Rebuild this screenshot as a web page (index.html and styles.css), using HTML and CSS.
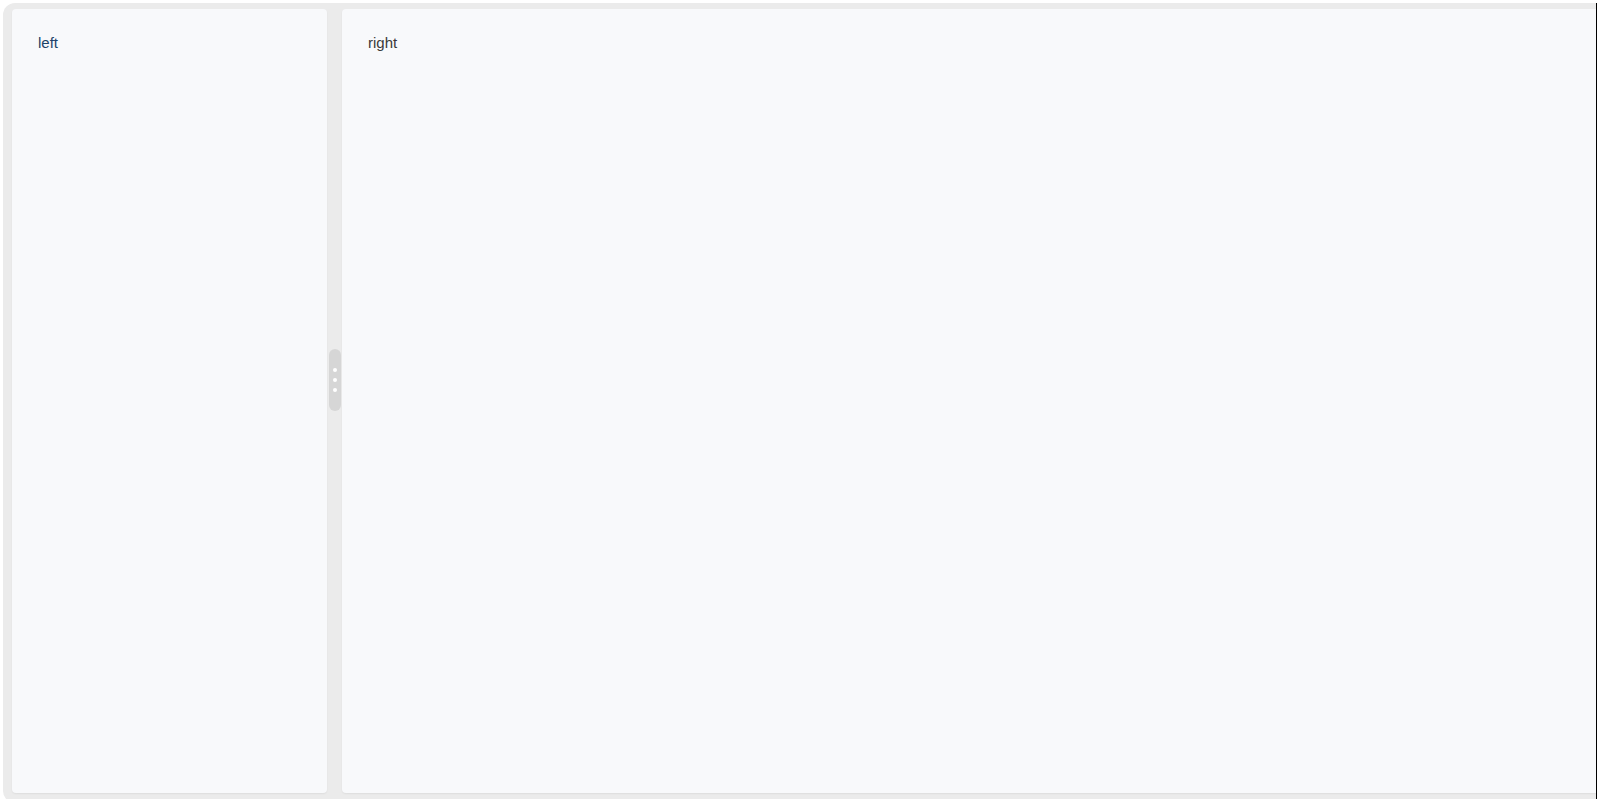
FILE: index.html
```html
<!DOCTYPE html>
<html lang="en">
<head>
  <meta charset="UTF-8">
  <title>Split panes</title>
  <link rel="stylesheet" href="styles.css">
</head>
<body>

<div class="frame">
  <div class="pane pane-left">
    <span class="label-left">left</span>
  </div>

  <div class="splitter">
    <div class="grip">
      <span class="dot"></span>
      <span class="dot"></span>
      <span class="dot"></span>
    </div>
  </div>

  <div class="pane pane-right">
    <span class="label-right">right</span>
  </div>
</div>

</body>
</html>
```

FILE: styles.css
```css
* { box-sizing: border-box; }
html, body {
  margin: 0;
  height: 100%;
  overflow: hidden;
}
body {
  font-family: 'Liberation Sans', Arial, sans-serif;
  background: #ffffff;
  padding: 3px 0 0 3px;
}
.frame {
  display: flex;
  height: 800px;
  background-color: #ebebeb;
  border-radius: 12px 0 0 12px;
  border-right: 1px solid #000;
  padding: 6px 0 6px 9px;
}
.pane {
  background-color: #f8f9fb;
  border-radius: 4px;
  box-shadow: 0 1px 2px rgba(0,0,0,0.06);
  padding: 25px 26px;
  font-size: 15px;
  line-height: 17px;
  height: 784px;
}
.pane-left {
  width: 315px;
  flex: none;
}
.pane-right {
  flex: 1;
  border-radius: 4px 0 0 4px;
}
.label-left { color: #1d4268; }
.label-right { color: #3a3a3a; }
.splitter {
  width: 15px;
  flex: none;
  display: flex;
  justify-content: center;
  padding-top: 340px;
}
.grip {
  width: 12px;
  height: 62px;
  background-color: #d6d6d6;
  border-radius: 6px;
  display: flex;
  flex-direction: column;
  align-items: center;
  justify-content: center;
  gap: 6px;
}
.dot {
  width: 4px;
  height: 4px;
  border-radius: 50%;
  background-color: #ffffff;
}
```
